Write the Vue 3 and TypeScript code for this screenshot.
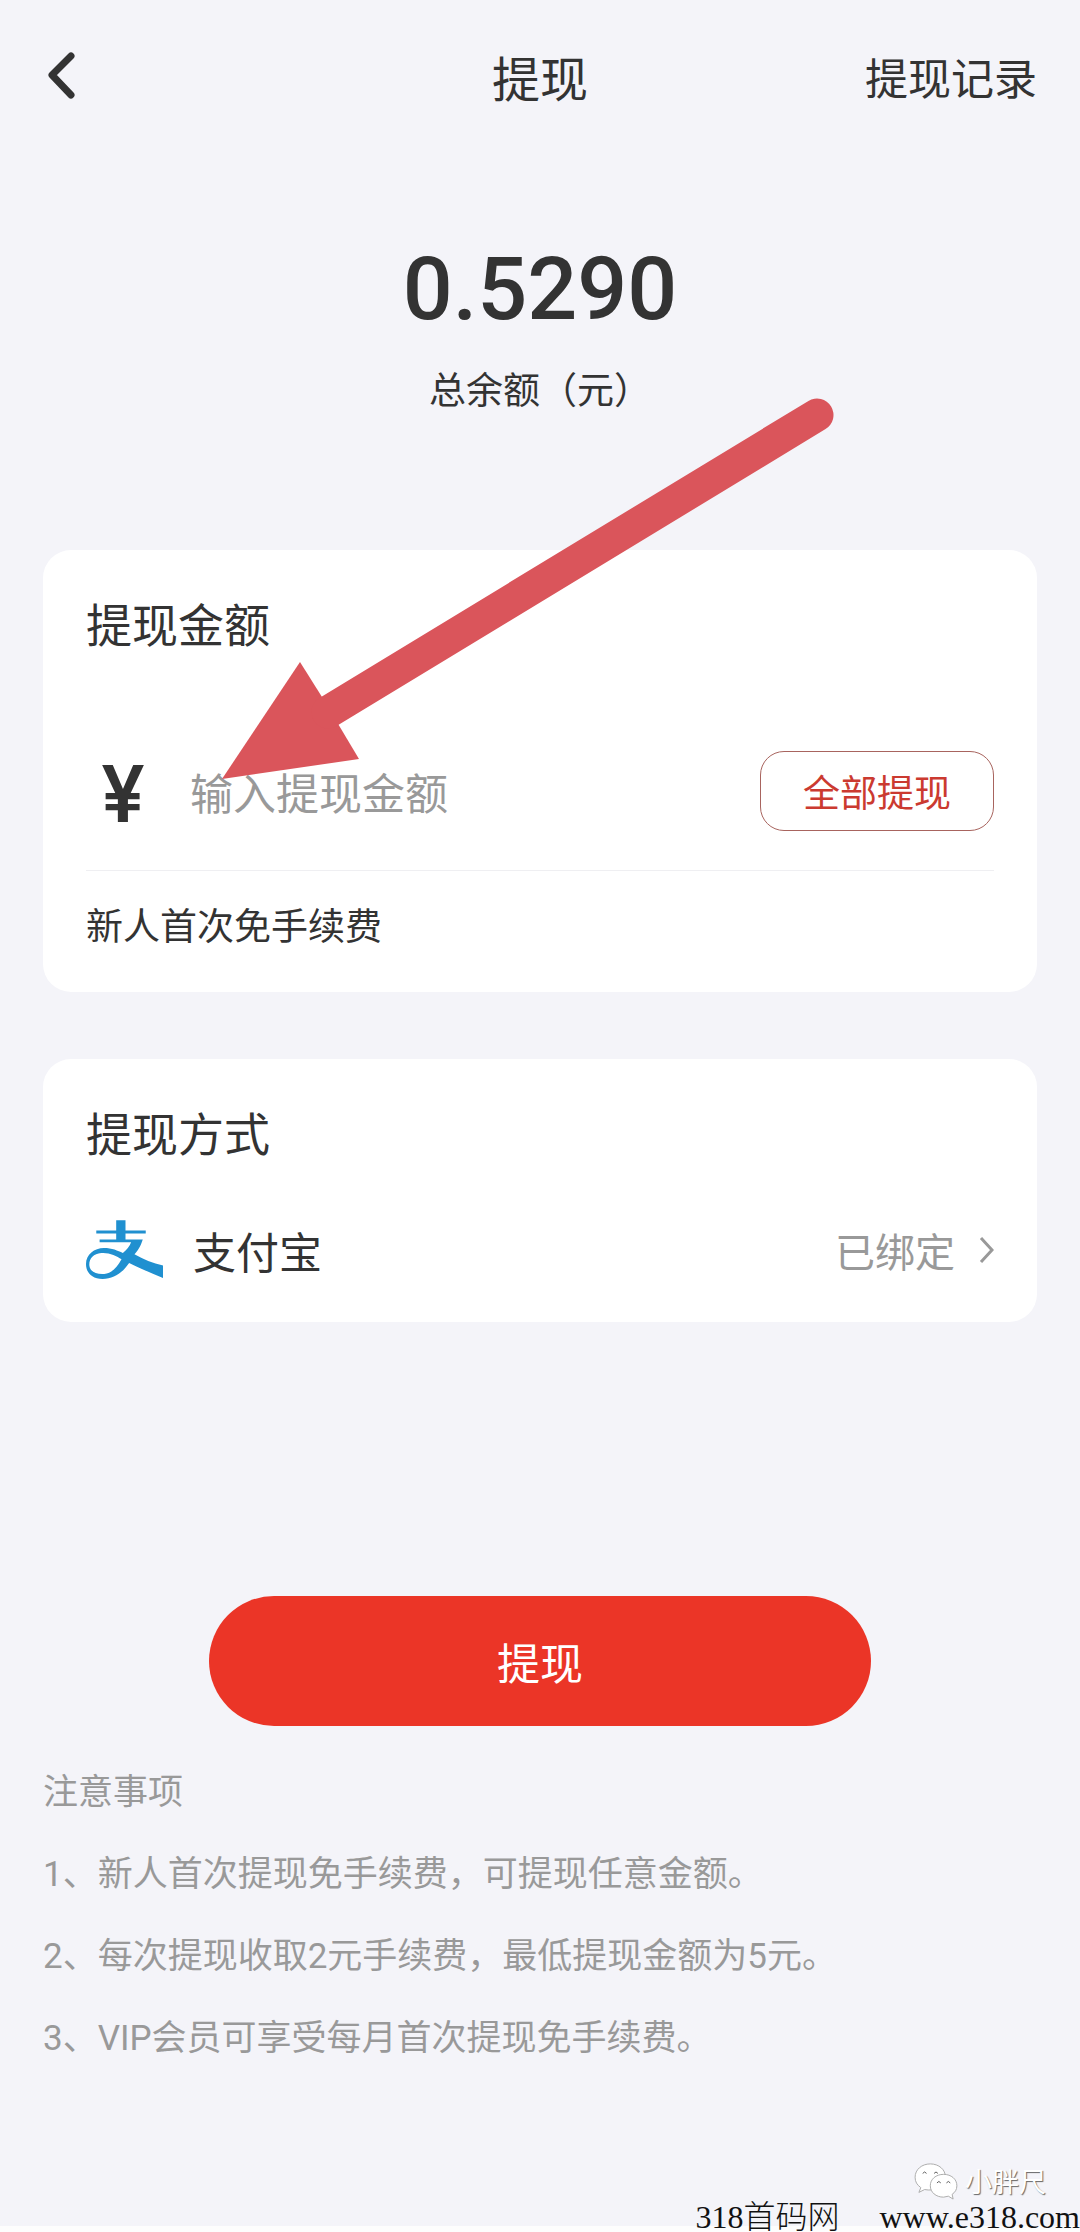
<script setup lang="ts">
import { ref } from 'vue'

const balance = ref('0.5290')
const amount = ref('')

const notes: string[] = [
  '1、新人首次提现免手续费，可提现任意金额。',
  '2、每次提现收取2元手续费，最低提现金额为5元。',
  '3、VIP会员可享受每月首次提现免手续费。',
]

function withdrawAll(): void {
  amount.value = balance.value
}
</script>

<template>
  <div class="page">
    <header class="header">
      <button class="back" type="button" aria-label="返回">
        <svg width="28" height="48" viewBox="0 0 28 48" fill="none" aria-hidden="true">
          <path d="M24 4 5 23 24 43" stroke="#333" stroke-width="7" stroke-linecap="round" stroke-linejoin="round" />
        </svg>
      </button>
      <h1 class="header-title">提现</h1>
      <a class="records" href="#records">提现记录</a>
    </header>

    <main>
      <section class="balance">
        <p class="balance-value">{{ balance }}</p>
        <p class="balance-label">总余额（元）</p>
      </section>

      <section class="card amount-card">
        <h2 class="card-title">提现金额</h2>
        <div class="amount-row">
          <label class="currency" for="amount">¥</label>
          <input id="amount" v-model="amount" class="amount-input" type="text" inputmode="decimal" placeholder="输入提现金额" />
          <button class="all-button" type="button" @click="withdrawAll">全部提现</button>
        </div>
        <p class="hint">新人首次免手续费</p>

        <svg class="arrow" width="614" height="382" viewBox="0 0 614 382" aria-hidden="true">
          <path d="M0 381 78 264 100 299 137 361Z" fill="#da555b" />
          <path d="M106 314 595 17" stroke="#da555b" stroke-width="33" stroke-linecap="round" />
        </svg>
      </section>

      <section class="card method-card">
        <h2 class="card-title">提现方式</h2>
        <button class="method-row" type="button">
          <svg class="alipay" width="77" height="60" viewBox="0 0 232 180" aria-hidden="true">
            <g fill="#2090d0">
              <path d="M91 0h28v62H91zM31 31h149v9H31z" />
              <path
                fill-rule="evenodd"
                d="M41 58H171C164 80 156 92 146 103C172 118 202 130 232 137V174C195 160 160 143 130 129C108 160 84 177 50 177C15 177 0 156 0 132C0 104 25 84 54 84C78 84 96 92 111 99C123 90 131 79 136 67H41ZM107 118C92 108 70 97 46 99C22 101 9 116 10 136C11 154 30 164 55 162C78 160 94 142 107 118Z"
              />
            </g>
          </svg>
          <span class="method-name">支付宝</span>
          <span class="method-status">已绑定</span>
          <svg width="15" height="28" viewBox="0 0 15 28" fill="none" aria-hidden="true">
            <path d="M2 2 13 14 2 26" stroke="#999" stroke-width="3" />
          </svg>
        </button>
      </section>

      <button class="submit" type="button">提现</button>

      <section class="notes">
        <h2 class="note">注意事项</h2>
        <p v-for="note in notes" :key="note" class="note">{{ note }}</p>
      </section>
    </main>

    <div class="author">
      <svg width="46" height="38" viewBox="0 0 46 40" aria-hidden="true">
        <g fill="#fff" stroke="#aaa" stroke-width="1">
          <path d="M17 2C8 2 1 8 1 16c0 5 2 8 6 11l-2 5 6-3c10 2 22-2 22-13C33 8 26 2 17 2Z" />
          <path d="M31 13c-8 0-14 5-14 12s6 12 14 12l5-1 5 3-1-5c3-2 5-5 5-9 0-7-6-12-14-12Z" />
        </g>
        <path d="M9 12q2-3 4 0M21 12q2-3 4 0M24 22q2-3 4 0M34 22q2-3 4 0" fill="none" stroke="#555" stroke-width="1" />
      </svg>
      <span>小胖尺</span>
    </div>
    <footer class="site">
      <span>318首码网</span>
      <span>www.e318.com</span>
    </footer>
  </div>
</template>

<style>
body {
  margin: 0;
  background: #fff;
}
</style>

<style scoped>
.page {
  position: relative;
  box-sizing: border-box;
  min-height: 100vh;
  padding: 0 43px;
  background: linear-gradient(to top, #fdfdfd 6px, #f4f4f9 6px);
  color: #333;
  font-family: 'Noto Sans CJK SC', sans-serif;
}

h1,
h2,
p {
  margin: 0;
  font-weight: 400;
}

button,
input {
  margin: 0;
  padding: 0;
  border: 0;
  background: none;
  color: inherit;
  font-family: inherit;
}

button {
  cursor: pointer;
}

svg {
  display: block;
  flex: none;
}

.header {
  display: grid;
  grid-template-columns: 1fr auto 1fr;
  align-items: center;
  height: 152px;
}

.back {
  justify-self: start;
  padding-left: 4px;
}

.header-title {
  font-size: 48px;
  line-height: 60px;
}

.records {
  justify-self: end;
  color: inherit;
  font-size: 43px;
  line-height: 60px;
  text-decoration: none;
}

.balance {
  padding: 84px 0 136px;
  text-align: center;
}

.balance-value {
  font-family: Roboto, sans-serif;
  font-size: 88px;
  font-weight: 500;
  line-height: 106px;
}

.balance-label {
  margin-top: 20px;
  font-size: 37px;
  line-height: 52px;
}

.card {
  padding: 42px 43px;
  border-radius: 28px;
  background: #fff;
}

.card-title {
  font-size: 46px;
  line-height: 60px;
}

.amount-card {
  position: relative;
}

.amount-row {
  display: flex;
  align-items: center;
  gap: 30px;
  margin-top: 99px;
  padding-bottom: 39px;
  border-bottom: 1px solid #efeff2;
}

.currency {
  box-sizing: border-box;
  width: 74px;
  height: 80px;
  padding-top: 6px;
  font-family: Inter, sans-serif;
  font-size: 78px;
  font-weight: 600;
  line-height: 74px;
  text-align: center;
}

.amount-input {
  flex: 1;
  min-width: 0;
  height: 80px;
  outline: none;
  font-size: 43px;
}

.amount-input::placeholder {
  color: #999;
  opacity: 1;
}

.all-button {
  box-sizing: border-box;
  height: 80px;
  padding: 0 42px;
  border: 1px solid #a8645e;
  border-radius: 24px;
  color: #cb3a30;
  font-size: 37px;
  line-height: 52px;
}

.hint {
  margin-top: 27px;
  font-size: 37px;
  line-height: 52px;
}

.arrow {
  position: absolute;
  top: -152px;
  left: 179px;
  pointer-events: none;
}

.method-card {
  margin-top: 67px;
}

.method-row {
  display: flex;
  align-items: center;
  gap: 24px;
  width: 100%;
  margin-top: 59px;
  text-align: left;
}

.method-name {
  flex: 1;
  padding-left: 6px;
  font-size: 43px;
  line-height: 60px;
}

.method-status {
  color: #999;
  font-size: 40px;
  line-height: 60px;
}

.submit {
  display: block;
  width: 662px;
  max-width: 100%;
  height: 130px;
  margin: 274px auto 0;
  border-radius: 65px;
  background: #eb3527;
  color: #fff;
  font-size: 43px;
}

.notes {
  margin-top: 26px;
  color: #999;
  font-family: Roboto, 'Noto Sans CJK SC', sans-serif;
}

.note {
  font-size: 35px;
  line-height: 82px;
}

.author {
  position: absolute;
  right: 34px;
  bottom: 32px;
  display: flex;
  align-items: center;
  gap: 6px;
  color: #fff;
  font-size: 27px;
  line-height: 36px;
  text-shadow: 1px 1px 1px #666;
}

.site {
  position: absolute;
  right: 0;
  bottom: 0;
  display: flex;
  gap: 40px;
  color: #111;
  font-family: 'Liberation Serif', 'Noto Sans CJK SC', serif;
  font-size: 32px;
  font-weight: 300;
  line-height: 30px;
}
</style>
